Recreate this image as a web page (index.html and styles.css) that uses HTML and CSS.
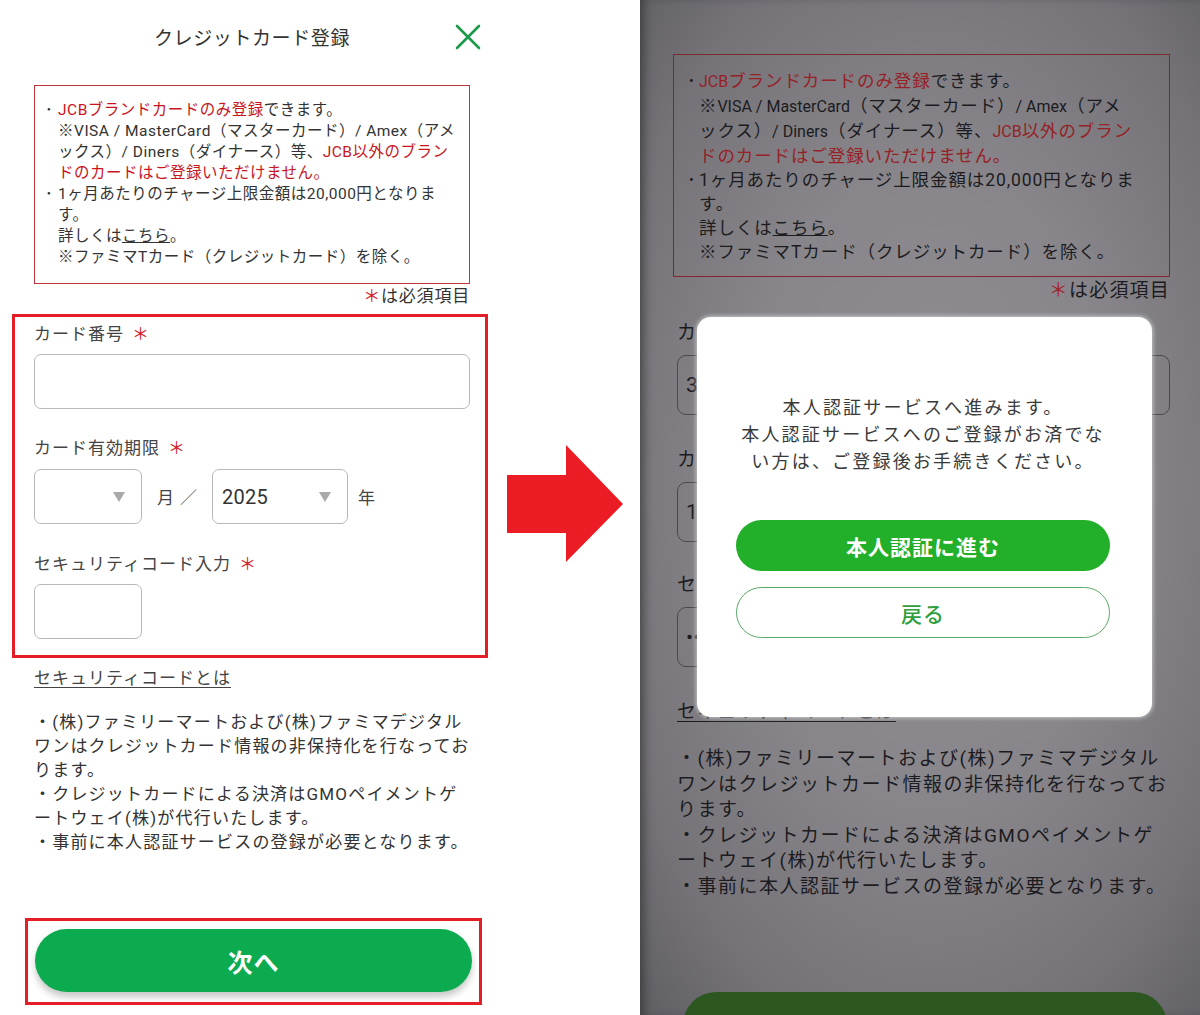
FILE: index.html
```html
<!DOCTYPE html>
<html lang="ja">
<head>
<meta charset="utf-8">
<title>クレジットカード登録</title>
<link rel="stylesheet" href="styles.css">
</head>
<body>
<div class="stage">
  <section class="phone phone-left">
    <header class="topbar">
      <span></span>
      <h1 class="title">クレジットカード登録</h1>
      <svg class="close" width="26" height="26" viewBox="0 0 26 26" aria-label="閉じる">
        <path d="M2 2 L24 24 M24 2 L2 24" stroke="#1b9a4b" stroke-width="2.6" stroke-linecap="round" fill="none"/>
      </svg>
    </header>

    <div class="notice">
      <div class="item"><span class="dot">･</span><p><span class="red"><span class="en">JCB</span>ブランドカードのみ登録</span>できます。<br>※<span class="en">VISA / MasterCard</span>（マスターカード）<span class="en">/ Amex</span>（アメ<br>ックス）<span class="en">/ Diners</span>（ダイナース）等、<span class="red"><span class="en">JCB</span>以外のブラン<br>ドのカードはご登録いただけません。</span></p></div>
      <div class="item"><span class="dot">･</span><p>1ヶ月あたりのチャージ上限金額は20,000円となりま<br>す。<br>詳しくは<u>こちら</u>。<br>※ファミマTカード（クレジットカード）を除く。</p></div>
    </div>
    <p class="req"><span class="ast">＊</span>は必須項目</p>

    <div class="field f1">
      <div class="label">カード番号<span class="ast">＊</span></div>
      <div class="box wide"></div>
    </div>
    <div class="field f2">
      <div class="label">カード有効期限<span class="ast">＊</span></div>
      <div class="row">
        <div class="box sel month"><span class="val"></span><span class="tri"></span></div>
        <span class="unit u-month">月</span><span class="unit u-slash">／</span>
        <div class="box sel year"><span class="val">2025</span><span class="tri"></span></div>
        <span class="unit u-year">年</span>
      </div>
    </div>
    <div class="field f3">
      <div class="label">セキュリティコード入力<span class="ast">＊</span></div>
      <div class="box small"></div>
    </div>
    <a class="link">セキュリティコードとは</a>
    <p class="para">・(株)ファミリーマートおよび(株)ファミマデジタル<br>ワンはクレジットカード情報の非保持化を行なってお<br>ります。<br>・クレジットカードによる決済はGMOペイメントゲ<br>ートウェイ(株)が代行いたします。<br>・事前に本人認証サービスの登録が必要となります。</p>
    <button class="next">次へ</button>

    <div class="mark mark-form"></div>
    <div class="mark mark-btn"></div>
  </section>

  <div class="arrow-col">
    <svg class="arrow" width="117" height="118" viewBox="0 0 117 118">
      <polygon points="0,30 59,30 59,0 116,59 59,117 59,88 0,88" fill="#ec1c24"/>
    </svg>
  </div>

  <section class="phone phone-right">
    <div class="notice">
      <div class="item"><span class="dot">･</span><p><span class="red"><span class="en">JCB</span>ブランドカードのみ登録</span>できます。<br>※<span class="en">VISA / MasterCard</span>（マスターカード）<span class="en">/ Amex</span>（アメ<br>ックス）<span class="en">/ Diners</span>（ダイナース）等、<span class="red"><span class="en">JCB</span>以外のブラン<br>ドのカードはご登録いただけません。</span></p></div>
      <div class="item"><span class="dot">･</span><p>1ヶ月あたりのチャージ上限金額は20,000円となりま<br>す。<br>詳しくは<u>こちら</u>。<br>※ファミマTカード（クレジットカード）を除く。</p></div>
    </div>
    <p class="req"><span class="ast">＊</span>は必須項目</p>

    <div class="field f1">
      <div class="label">カード番号<span class="ast">＊</span></div>
      <div class="box wide"><span class="val">3540 1234 5678 9012</span></div>
    </div>
    <div class="field f2">
      <div class="label">カ<span class="hidden-part">ード有効期限</span></div>
      <div class="row">
        <div class="box sel month"><span class="val">12</span><span class="tri"></span></div>
      </div>
    </div>
    <div class="field f3">
      <div class="label">セキュリティコード入力<span class="ast">＊</span></div>
      <div class="box small"><span class="val">•••</span></div>
    </div>
    <a class="link">セキュリティコードとは</a>
    <p class="para">・(株)ファミリーマートおよび(株)ファミマデジタル<br>ワンはクレジットカード情報の非保持化を行なってお<br>ります。<br>・クレジットカードによる決済はGMOペイメントゲ<br>ートウェイ(株)が代行いたします。<br>・事前に本人認証サービスの登録が必要となります。</p>
    <button class="next" aria-label="次へ"></button>

    <div class="modal">
      <p class="modal-text">本人認証サービスへ進みます。<br>本人認証サービスへのご登録がお済でな<br>い方は、ご登録後お手続きください。</p>
      <button class="btn-primary">本人認証に進む</button>
      <button class="btn-outline">戻る</button>
    </div>
  </section>
</div>
</body>
</html>
```

FILE: styles.css
```css
* { box-sizing: border-box; margin: 0; padding: 0; }
html, body { width: 1200px; height: 1015px; overflow: hidden; background: #fff; }
body { font-family: Roboto, "Noto Sans CJK JP", sans-serif; color: #333; }

.stage { display: flex; width: 1200px; height: 1015px; }

.phone { position: relative; flex: none; height: 1015px; overflow: hidden; }

/* ---------- left phone ---------- */
.phone-left { width: 505px; padding: 0 35px 0 34px; background: #fff; }

.topbar {
  height: 76px;
  display: grid;
  grid-template-columns: 1fr auto 1fr;
  align-items: center;
}
.title { font-size: 19px; font-weight: 400; letter-spacing: 0.6px; color: #333; margin-top: -4px; }
.close { justify-self: end; margin-right: -11px; margin-top: -2px; }

.phone-left .notice {
  margin-top: 9px;
  border: 1.5px solid #c0343a;
  padding: 14px 10px 15px 10px;
  font-size: 15.5px;
  line-height: 21px;
  letter-spacing: 0.5px;
  color: #333;
  white-space: nowrap;
}
.item { display: flex; }
.dot { flex: 0 0 13px; }
.phone-left .red { color: #c8161d; }

.phone-left .req {
  margin-top: 2px;
  text-align: right;
  font-size: 17px;
  line-height: 20px;
  letter-spacing: 0.8px;
  color: #333;
}
.ast { color: #d3232b; }
.label .ast { margin-left: 8px; }

.phone-left .label {
  font-size: 17px;
  line-height: 24px;
  letter-spacing: 1px;
  color: #444;
}
.phone-left .f1 { margin-top: 16px; }
.phone-left .f2 { margin-top: 27px; }
.phone-left .f3 { margin-top: 28px; }
.phone-left .field .box { margin-top: 8px; }
.phone-left .f2 .row { margin-top: 9px; }
.phone-left .f2 .row .box { margin-top: 0; }

.box {
  border: 1.5px solid #b8b8b8;
  border-radius: 7px;
  height: 55px;
  background: #fff;
  display: flex;
  align-items: center;
}
.wide { width: 436px; }
.small { width: 108px; }

.row { display: flex; align-items: center; }
.sel { justify-content: space-between; padding: 0 16px 0 9px; }
.month { width: 108px; }
.year { width: 136px; }
.val { font-size: 20px; color: #333; letter-spacing: 0.3px; }
.tri {
  width: 0; height: 0;
  border-left: 6.5px solid transparent;
  border-right: 6.5px solid transparent;
  border-top: 10px solid #a9a9a9;
}
.unit { font-size: 17px; color: #444; }
.u-month { margin-left: 15px; }
.u-slash { margin-left: 6px; margin-right: 15px; color: #666; }
.u-year { margin-left: 10px; }

.phone-left .link {
  display: block;
  margin-top: 27px;
  font-size: 17px;
  line-height: 24px;
  letter-spacing: 1px;
  color: #444;
  text-decoration: underline;
  text-underline-offset: 3px;
}
.phone-left .para {
  margin-top: 20px;
  font-size: 17px;
  line-height: 24px;
  letter-spacing: 1.2px;
  color: #333;
  white-space: nowrap;
}

.next {
  display: block;
  border: none;
  font-family: inherit;
  font-weight: 700;
  color: #fff;
}
.phone-left .next {
  margin: 75px 0 0 1px;
  width: 437px;
  height: 63px;
  border-radius: 32px;
  background: #0dab50;
  font-size: 25px;
  letter-spacing: 1px;
  box-shadow: 0 5px 7px rgba(0, 0, 0, 0.22);
}

/* annotation rectangles drawn over the screenshot */
.mark { position: absolute; border: 3px solid #e31e26; pointer-events: none; }
.mark-form { left: 12px; top: 314px; width: 476px; height: 344px; }
.mark-btn { left: 25px; top: 918px; width: 457px; height: 87px; }

/* ---------- arrow ---------- */
.arrow-col { width: 135px; flex: none; padding: 445px 0 0 2px; }
.arrow { display: block; }

/* ---------- right phone (dimmed, with dialog) ---------- */
.phone-right {
  width: 560px;
  padding: 0 30px 0 33px;
  background:
    radial-gradient(ellipse 75% 70% at 52% 48%, #908e92 0%, #88868a 45%, #757378 80%, #616065 100%);
  box-shadow: inset 8px 0 10px -4px rgba(40, 40, 44, 0.6);
  color: #1c1b1f;
}
.phone-right .notice {
  margin-top: 54px;
  border: 1.5px solid #7e2a2d;
  padding: 14px 10px 12px 13px;
  font-size: 17.5px;
  line-height: 24px;
  letter-spacing: 0.9px;
  color: #1c1b1f;
  white-space: nowrap;
}
.phone-right .notice .en { font-size: 16px; letter-spacing: 0; }
.phone-right .dot { flex: 0 0 12px; }
.phone-right .red { color: #962126; }
.phone-right .req {
  margin-top: 3px;
  text-align: right;
  font-size: 19px;
  line-height: 22px;
  letter-spacing: 1.2px;
  color: #1c1b1f;
}
.phone-right .ast { color: #a3232a; }

.phone-right .field { margin-left: 4px; }
.phone-right .label {
  font-size: 19px;
  line-height: 24px;
  letter-spacing: 1px;
  color: #1c1b1f;
}
.hidden-part { visibility: hidden; }
.phone-right .f1 { margin-top: 19px; }
.phone-right .f2 { margin-top: 33px; }
.phone-right .f3 { margin-top: 31px; }
.phone-right .box {
  margin-top: 10px;
  height: 60px;
  border: 1.5px solid #4a494e;
  border-radius: 9px;
  background: transparent;
  padding-left: 8px;
}
.phone-right .f2 .row { margin-top: 10px; }
.phone-right .f2 .row .box { margin-top: 0; }
.phone-right .wide { width: 493px; }
.phone-right .small { width: 123px; }
.phone-right .month { width: 123px; }
.phone-right .val { color: #1c1b1f; font-size: 21px; }
.phone-right .tri { border-top-color: #555; }

.phone-right .link {
  display: block;
  margin: 33px 0 0 4px;
  font-size: 19px;
  line-height: 24px;
  letter-spacing: 1px;
  color: #1c1b1f;
  text-decoration: underline;
  text-underline-offset: 3px;
}
.phone-right .para {
  margin: 22px 0 0 4px;
  font-size: 19px;
  line-height: 25.6px;
  letter-spacing: 1.5px;
  color: #1c1b1f;
  white-space: nowrap;
}
.phone-right .next {
  margin: 92px 0 0 10px;
  width: 484px;
  height: 66px;
  border-radius: 33px;
  background: #2c5720;
}

.modal {
  position: absolute;
  left: 57px;
  top: 317px;
  width: 455px;
  height: 400px;
  background: #fff;
  border-radius: 14px;
  box-shadow: 0 0 4px 1px rgba(255, 255, 255, 0.55);
  padding: 77px 42px 0 39px;
  display: flex;
  flex-direction: column;
  align-items: stretch;
}
.modal-text {
  text-align: center;
  font-size: 18px;
  line-height: 27px;
  letter-spacing: 2.2px;
  color: #3a3a3a;
  white-space: nowrap;
}
.btn-primary, .btn-outline {
  display: block;
  width: 374px;
  height: 51px;
  border-radius: 26px;
  font-family: inherit;
  font-size: 21px;
  letter-spacing: 1px;
}
.btn-primary {
  margin-top: 45px;
  border: none;
  background: #22af2a;
  color: #fff;
  font-weight: 700;
}
.btn-outline {
  margin-top: 16px;
  border: 1.3px solid #5aa868;
  background: #fff;
  color: #2f9e3c;
  font-weight: 500;
}
```
